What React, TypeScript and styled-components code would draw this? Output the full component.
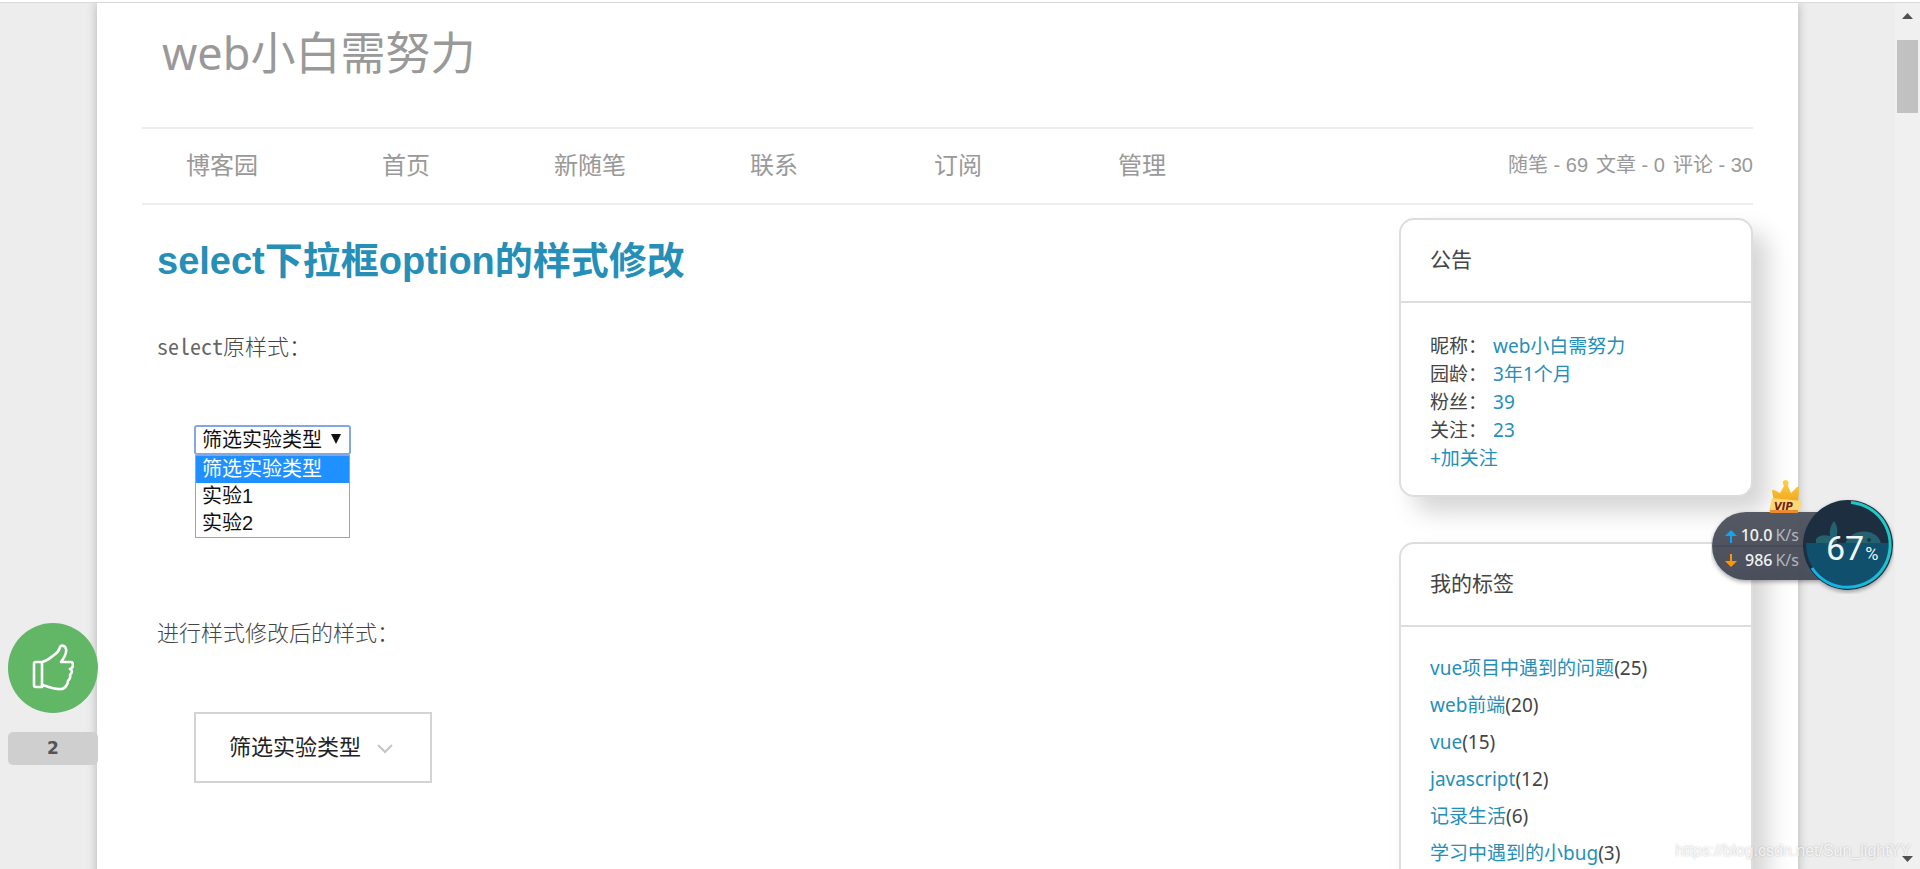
import React from "react";
import styled, { createGlobalStyle } from "styled-components";

const LINK = "#258fb8";

const GlobalStyle = createGlobalStyle`
  * { box-sizing: border-box; }
  body {
    margin: 0;
    background: #ededed;
    color: #444;
    font-family: "Noto Sans", "Noto Sans CJK SC", sans-serif;
    font-size: 19px;
    font-weight: 300;
  }
  ul, dl, dd, h1, h2, p { margin: 0; padding: 0; list-style: none; }
  a { color: ${LINK}; text-decoration: none; }
`;

const Viewport = styled.div`
  display: flex;
  height: 100vh;
  overflow: hidden;
  position: relative;
  border-top: 2px solid #fff;
`;

const Scroller = styled.div`
  flex: 1;
  border-top: 1px solid #d9d9d9;
  overflow: hidden;
`;

const Page = styled.div`
  margin: 0 97px;
  padding: 0 45px;
  min-height: 100%;
  background: #fff;
  box-shadow: 0 0 10px rgba(0, 0, 0, 0.25);
`;

const Header = styled.header`
  height: 124px;
  padding: 16px 20px 0;
`;

const BlogTitle = styled.a`
  color: #999;
  font-size: 45px;
  line-height: 68px;
  font-weight: 400;
`;

const NavBar = styled.nav`
  display: flex;
  justify-content: space-between;
  align-items: center;
  height: 78px;
  padding-bottom: 2px;
  border-top: 2px solid #ededed;
  border-bottom: 2px solid #ededed;
`;

const NavList = styled.ul`
  display: flex;
  gap: 24px;
`;

const NavItem = styled.li`
  width: 160px;
  text-align: center;
  font-size: 24px;
  line-height: 36px;
  font-weight: 400;
  a { color: #999; }
`;

const Stats = styled.div`
  display: flex;
  gap: 8px;
  padding-bottom: 3px;
  color: #999;
  font-family: "Liberation Sans", "Noto Sans CJK SC", sans-serif;
  font-size: 20px;
  font-weight: 400;
  white-space: nowrap;
`;

const Main = styled.main`
  display: flex;
  justify-content: space-between;
  gap: 40px;
`;

const Article = styled.article`
  flex: 1;
  padding: 28px 15px 0;
`;

const ArticleTitle = styled.h1`
  font-family: "Liberation Sans", "Noto Sans CJK SC", sans-serif;
  font-size: 38px;
  line-height: 56px;
  font-weight: 700;
`;

const Paragraph = styled.p<{ $space: number }>`
  margin-top: ${(p) => p.$space}px;
  font-size: 22px;
  line-height: 32px;
`;

const Mono = styled.span`
  color: #666;
  font-family: "Noto Sans Mono CJK SC", monospace;
`;

const NativeDemo = styled.div`
  position: relative;
  width: 157px;
  margin: 63px 0 0 37px;
  color: #111;
  font-family: "Liberation Sans", "Noto Sans CJK SC", sans-serif;
  font-size: 20px;
  font-weight: 400;
`;

const NativeSelect = styled.select`
  display: block;
  appearance: none;
  width: 100%;
  height: 30px;
  padding: 0 6px;
  border: 2px solid #84a7e4;
  border-radius: 3px;
  background: #fff;
  color: inherit;
  font: inherit;
`;

const NativeArrow = styled.svg`
  position: absolute;
  top: 9px;
  right: 10px;
  pointer-events: none;
`;

const OptionList = styled.ul`
  margin: 0 1px;
  border: 1px solid #84a7e4;
`;

const OptionRow = styled.li<{ $active?: boolean }>`
  padding: 0 6px;
  line-height: 27px;
  background: ${(p) => (p.$active ? "#1e90ff" : "#fff")};
  color: ${(p) => (p.$active ? "#fff" : "inherit")};
`;

const StyledDemo = styled.div`
  position: relative;
  width: 238px;
  margin: 64px 0 0 37px;
`;

const PlainSelect = styled.select`
  display: block;
  appearance: none;
  width: 100%;
  height: 71px;
  padding: 0 33px 4px;
  border: 2px solid #d3d3d3;
  border-radius: 0;
  background: #fff;
  color: #222;
  font-family: inherit;
  font-size: 22px;
`;

const PlainArrow = styled.svg`
  position: absolute;
  top: 31px;
  right: 39px;
  pointer-events: none;
`;

const Sidebar = styled.aside`
  display: flex;
  flex-direction: column;
  gap: 45px;
  width: 354px;
  padding-top: 13px;
  font-weight: 400;
`;

const Card = styled.section`
  border: 2px solid #ddd;
  border-radius: 15px;
  background: #fff;
  box-shadow: 15px 15px 25px rgba(0, 0, 0, 0.17);
`;

const CardTitle = styled.h2`
  padding: 0 29px 2px;
  border-bottom: 2px solid #ddd;
  font-size: 21px;
  line-height: 79px;
  font-weight: 400;
`;

const Profile = styled.dl`
  padding: 29px 29px 23px;
  line-height: 28px;
`;

const ProfileRow = styled.div`
  display: flex;
  gap: 6px;
`;

const TagList = styled.ul`
  padding: 23px 29px;
  line-height: 37px;
`;

const LikeBox = styled.div`
  position: absolute;
  left: 8px;
  top: 621px;
  width: 90px;
`;

const LikeButton = styled.button`
  display: grid;
  place-items: center;
  width: 90px;
  height: 90px;
  padding: 0;
  border: 0;
  border-radius: 50%;
  background: #61b765;
`;

const LikeCount = styled.div`
  margin-top: 19px;
  border-radius: 5px;
  background: #cfcfcf;
  color: #555;
  font: 700 17px/33px "DejaVu Sans", sans-serif;
  text-align: center;
`;

const ScrollTrack = styled.div`
  display: flex;
  flex-direction: column;
  align-items: center;
  width: 25px;
  padding: 10px 0 7px;
  border-top: 1px solid #d9d9d9;
  background: #f0f0f0;
`;

const ScrollThumb = styled.div`
  width: 21px;
  height: 73px;
  margin: 21px 0 auto;
  background: #c1c1c1;
`;

const Meter = styled.div`
  position: absolute;
  right: 26px;
  top: 476px;
  width: 183px;
  height: 116px;
`;

const MeterArt = styled.svg`
  position: absolute;
  inset: 0;
`;

const Rates = styled.div`
  position: absolute;
  left: 14px;
  top: 45px;
  width: 74px;
`;

const Rate = styled.div`
  display: flex;
  align-items: center;
  gap: 3px;
  color: #f2f2f2;
  font: 500 16px/25px "Noto Sans", sans-serif;
  svg { margin-right: auto; }
  small { color: #b4b6ba; font-size: 16px; font-weight: 400; }
`;

const Percent = styled.div`
  position: absolute;
  left: 115px;
  top: 48px;
  display: flex;
  align-items: baseline;
  gap: 1px;
  color: #f1f6f8;
  font: 400 34px/44px "Roboto", sans-serif;
  small { font-size: 18px; }
`;

const Watermark = styled.div`
  position: absolute;
  right: 9px;
  bottom: 6px;
  color: rgba(255, 255, 255, 0.8);
  font: 400 16px/24px "Liberation Sans", sans-serif;
  text-shadow: 0 0 2px rgba(0, 0, 0, 0.25);
`;

const navItems = ["博客园", "首页", "新随笔", "联系", "订阅", "管理"];
const profile = [
  ["昵称：", "web小白需努力"],
  ["园龄：", "3年1个月"],
  ["粉丝：", "39"],
  ["关注：", "23"],
];
const tags: [string, number][] = [
  ["vue项目中遇到的问题", 25],
  ["web前端", 20],
  ["vue", 15],
  ["javascript", 12],
  ["记录生活", 6],
  ["学习中遇到的小bug", 3],
];
const options = ["筛选实验类型", "实验1", "实验2"];

function RateArrow({ down }: { down?: boolean }) {
  return (
    <svg width="12" height="14" viewBox="0 0 12 14" aria-hidden="true">
      {down ? (
        <path d="M5 0h2v7h5L6 13 0 7h5z" fill="#ff9500" />
      ) : (
        <path d="M5 14h2V7h5L6 1 0 7h5z" fill="#14a5ee" />
      )}
    </svg>
  );
}

function SpeedMeter() {
  return (
    <Meter>
      <MeterArt width="183" height="116" viewBox="0 0 183 116" aria-hidden="true">
        <defs>
          <linearGradient id="pill" x1="0" y1="0" x2="0" y2="1">
            <stop offset="0" stopColor="#50555f" />
            <stop offset="1" stopColor="#464b58" />
          </linearGradient>
          <linearGradient id="ring" x1="1" y1="0" x2="0" y2="1">
            <stop offset="0" stopColor="#22cdbc" />
            <stop offset="1" stopColor="#12b0ea" />
          </linearGradient>
          <linearGradient id="gold" x1="0" y1="0" x2="0" y2="1">
            <stop offset="0" stopColor="#fbd34a" />
            <stop offset="1" stopColor="#f3a51c" />
          </linearGradient>
          <filter id="soft" x="-20%" y="-20%" width="140%" height="150%">
            <feDropShadow dx="0" dy="2" stdDeviation="2" floodOpacity="0.35" />
          </filter>
          <clipPath id="disc"><circle cx="137" cy="67" r="42" /></clipPath>
        </defs>
        <g filter="url(#soft)">
          <path d="M35 34H137V102H35A34 34 0 0 1 35 34Z" fill="url(#pill)" opacity="0.96" />
          <circle cx="137" cy="67" r="45" fill="#1d2e3f" />
        </g>
        <path d="M3 68H92" stroke="#3f434e" />
        <g clipPath="url(#disc)">
          <path d="M105 61c4-5 10-4 14-3-1-6 1-11 4-15 4 5 4 12 2 17 2 2 1 5-1 6H105zM134 66c4-11 15-14 24-12 7 2 11 6 12 12z" fill="#23626e" />
          <rect x="92" y="65" width="90" height="50" fill="#10506c" />
          <circle cx="158" cy="62" r="2" fill="#173647" />
        </g>
        <path d="M140 24.5A42.500 42.500 0 1 1 101 90" fill="none" stroke="url(#ring)" strokeWidth="3" />
        <g>
          <path d="M63 23 61 13Q61 11 63 12L69 15 73 8Q70 3 74 2Q79 2 77 8L80 15 86 9Q89 8 88 11L87 24Z" fill="url(#gold)" />
          <path d="M61 20 91 23 88 34 58 33Z" fill="#fbd873" />
          <path d="M59 32h28v3H59z" fill="#ed8b35" />
          <text x="63" y="32" fontFamily="DejaVu Sans" fontWeight="700" fontStyle="italic" fontSize="10" fill="#6b2110">VIP</text>
        </g>
      </MeterArt>
      <Rates>
        <Rate><RateArrow />10.0<small>K/s</small></Rate>
        <Rate><RateArrow down />986<small>K/s</small></Rate>
      </Rates>
      <Percent>67<small>%</small></Percent>
    </Meter>
  );
}

export default function App() {
  return (
    <Viewport>
      <GlobalStyle />
      <Scroller>
        <Page>
          <Header>
            <BlogTitle href="#">web小白需努力</BlogTitle>
          </Header>
          <NavBar>
            <NavList>
              {navItems.map((item) => (
                <NavItem key={item}><a href="#">{item}</a></NavItem>
              ))}
            </NavList>
            <Stats>
              <span>随笔 - 69</span>
              <span>文章 - 0</span>
              <span>评论 - 30</span>
            </Stats>
          </NavBar>
          <Main>
            <Article>
              <ArticleTitle><a href="#">select下拉框option的样式修改</a></ArticleTitle>
              <Paragraph $space={40}><Mono>select</Mono>原样式：</Paragraph>
              <NativeDemo>
                <NativeSelect aria-label="筛选实验类型">
                  {options.map((o) => <option key={o}>{o}</option>)}
                </NativeSelect>
                <NativeArrow width="10" height="10" aria-hidden="true">
                  <path d="M0 0h10L5 10z" fill="#111" />
                </NativeArrow>
                <OptionList role="listbox" aria-label="筛选实验类型">
                  {options.map((o, i) => (
                    <OptionRow key={o} role="option" aria-selected={i === 0} $active={i === 0}>{o}</OptionRow>
                  ))}
                </OptionList>
              </NativeDemo>
              <Paragraph $space={78}>进行样式修改后的样式：</Paragraph>
              <StyledDemo>
                <PlainSelect aria-label="筛选实验类型">
                  {options.map((o) => <option key={o}>{o}</option>)}
                </PlainSelect>
                <PlainArrow width="16" height="12" aria-hidden="true">
                  <path d="M1 2l7 7 7-7" fill="none" stroke="#c4c4c4" strokeWidth="2" />
                </PlainArrow>
              </StyledDemo>
            </Article>
            <Sidebar>
              <Card>
                <CardTitle>公告</CardTitle>
                <Profile>
                  {profile.map(([label, value]) => (
                    <ProfileRow key={label}>
                      <dt>{label}</dt>
                      <dd><a href="#">{value}</a></dd>
                    </ProfileRow>
                  ))}
                  <ProfileRow><dd><a href="#">+加关注</a></dd></ProfileRow>
                </Profile>
              </Card>
              <Card>
                <CardTitle>我的标签</CardTitle>
                <TagList>
                  {tags.map(([name, count]) => (
                    <li key={name}><a href="#">{name}</a>({count})</li>
                  ))}
                </TagList>
              </Card>
            </Sidebar>
          </Main>
        </Page>
      </Scroller>
      <ScrollTrack aria-hidden="true">
        <svg width="11" height="6"><path d="M0 6 5.500 0 11 6z" fill="#505050" /></svg>
        <ScrollThumb />
        <svg width="11" height="6"><path d="M0 0h11L5.500 6z" fill="#505050" /></svg>
      </ScrollTrack>
      <LikeBox>
        <LikeButton aria-label="点赞">
          <svg width="42" height="48" viewBox="0 0 42 48" fill="none" stroke="#fff" strokeWidth="2.600" strokeLinejoin="round" strokeLinecap="round" aria-hidden="true">
            <path d="M10 18H4Q2 18 2 20V41Q2 43 4 43H10ZM10 18C15 17 18 14 22 11C27 8 27 6 28 3C29 1 33 1 34 5C35 9 32 14 29 18H39Q41 18 41 21C41 24 40 24 38 25C41 26 40 29 38 31C39 34 37 36 36 37C36 40 33 45 29 45C22 46 18 43 10 41" />
          </svg>
        </LikeButton>
        <LikeCount>2</LikeCount>
      </LikeBox>
      <SpeedMeter />
      <Watermark>https://blog.csdn.net/Sun_lightYY</Watermark>
    </Viewport>
  );
}
